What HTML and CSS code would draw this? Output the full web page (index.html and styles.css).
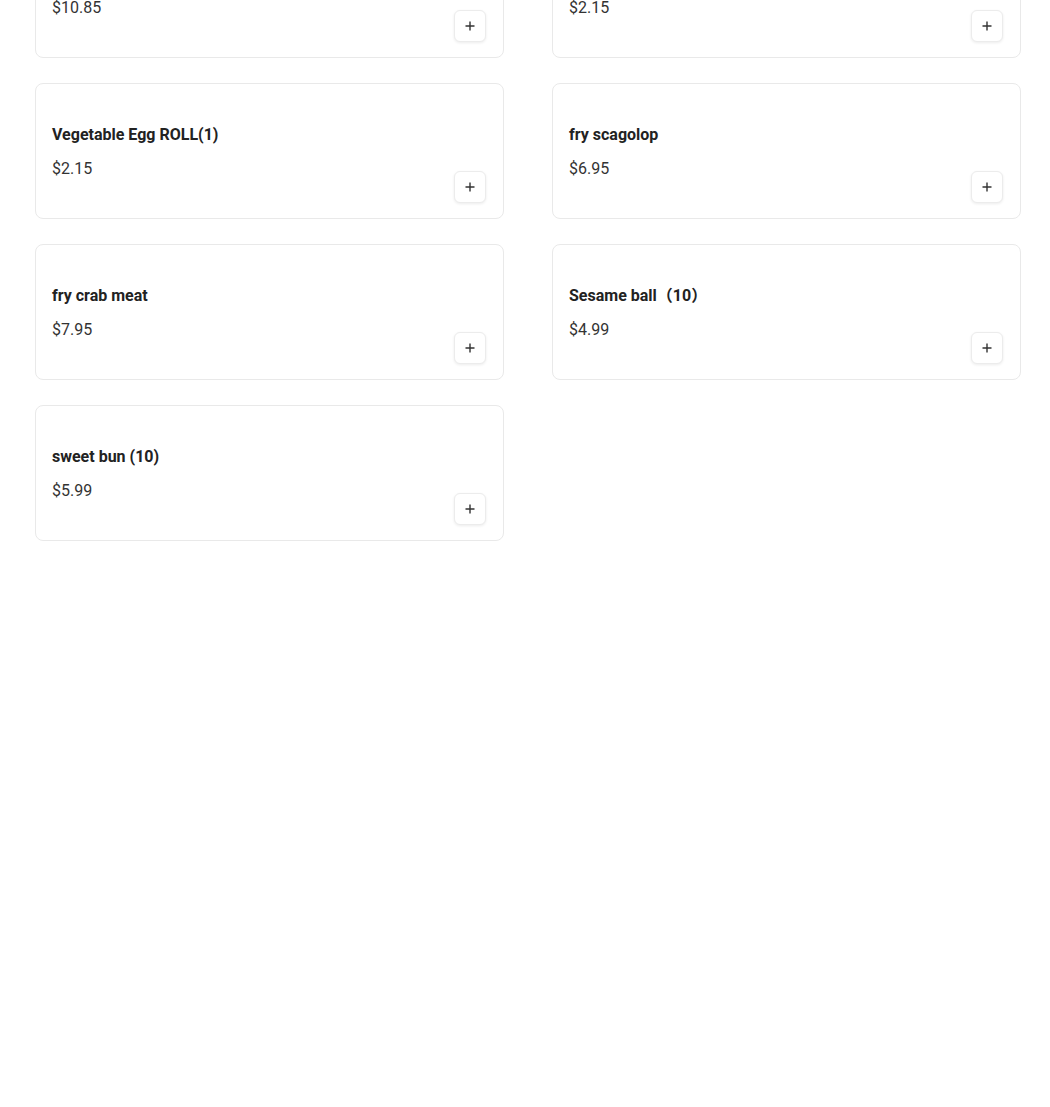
FILE: index.html
```html
<!DOCTYPE html>
<html>
<head>
<meta charset="utf-8">
<link rel="stylesheet" href="styles.css">
</head>
<body>
<div class="menu">
  <div class="card"><div class="info"><div class="name">Pork Egg Roll</div><div class="price">$10.85</div></div><button class="add"><svg viewBox="0 0 12 12" width="12" height="12"><path d="M6 1.5v9M1.5 6h9" stroke="#333" stroke-width="1.4"/></svg></button></div>
  <div class="card"><div class="info"><div class="name">Shrimp Egg Roll</div><div class="price">$2.15</div></div><button class="add"><svg viewBox="0 0 12 12" width="12" height="12"><path d="M6 1.5v9M1.5 6h9" stroke="#333" stroke-width="1.4"/></svg></button></div>
  <div class="card"><div class="info"><div class="name">Vegetable Egg ROLL(1)</div><div class="price">$2.15</div></div><button class="add"><svg viewBox="0 0 12 12" width="12" height="12"><path d="M6 1.5v9M1.5 6h9" stroke="#333" stroke-width="1.4"/></svg></button></div>
  <div class="card"><div class="info"><div class="name">fry scagolop</div><div class="price">$6.95</div></div><button class="add"><svg viewBox="0 0 12 12" width="12" height="12"><path d="M6 1.5v9M1.5 6h9" stroke="#333" stroke-width="1.4"/></svg></button></div>
  <div class="card"><div class="info"><div class="name">fry crab meat</div><div class="price">$7.95</div></div><button class="add"><svg viewBox="0 0 12 12" width="12" height="12"><path d="M6 1.5v9M1.5 6h9" stroke="#333" stroke-width="1.4"/></svg></button></div>
  <div class="card"><div class="info"><div class="name">Sesame ball（10）</div><div class="price">$4.99</div></div><button class="add"><svg viewBox="0 0 12 12" width="12" height="12"><path d="M6 1.5v9M1.5 6h9" stroke="#333" stroke-width="1.4"/></svg></button></div>
  <div class="card"><div class="info"><div class="name">sweet bun (10)</div><div class="price">$5.99</div></div><button class="add"><svg viewBox="0 0 12 12" width="12" height="12"><path d="M6 1.5v9M1.5 6h9" stroke="#333" stroke-width="1.4"/></svg></button></div>
</div>
</body>
</html>
```
FILE: styles.css
```css
html, body {
  margin: 0;
  padding: 0;
  background: #fff;
  font-family: Roboto, "Noto Sans", "Noto Sans CJK SC", sans-serif;
  color: #222;
}
.menu {
  display: grid;
  grid-template-columns: 469px 469px;
  column-gap: 48px;
  row-gap: 25px;
  padding-left: 35px;
  margin-top: -78px;
}
.card {
  box-sizing: border-box;
  height: 136px;
  border: 1px solid #e9e9e9;
  border-radius: 8px;
  padding: 16px 17px 16px 16px;
  display: flex;
  justify-content: space-between;
  align-items: flex-end;
  background: #fff;
}
.info {
  align-self: flex-start;
  padding-top: 23px;
}
.name {
  font-size: 16px;
  font-weight: 700;
  line-height: 24px;
  color: #222;
}
.price {
  margin-top: 10px;
  font-size: 16px;
  line-height: 24px;
  color: #333;
}
.add {
  width: 32px;
  height: 32px;
  margin-bottom: -1px;
  padding: 0;
  border: 1px solid #ececec;
  border-radius: 6px;
  background: #fff;
  box-shadow: 0 1px 3px rgba(0,0,0,0.08);
  display: flex;
  align-items: center;
  justify-content: center;
}
.add svg { display: block; }
```
